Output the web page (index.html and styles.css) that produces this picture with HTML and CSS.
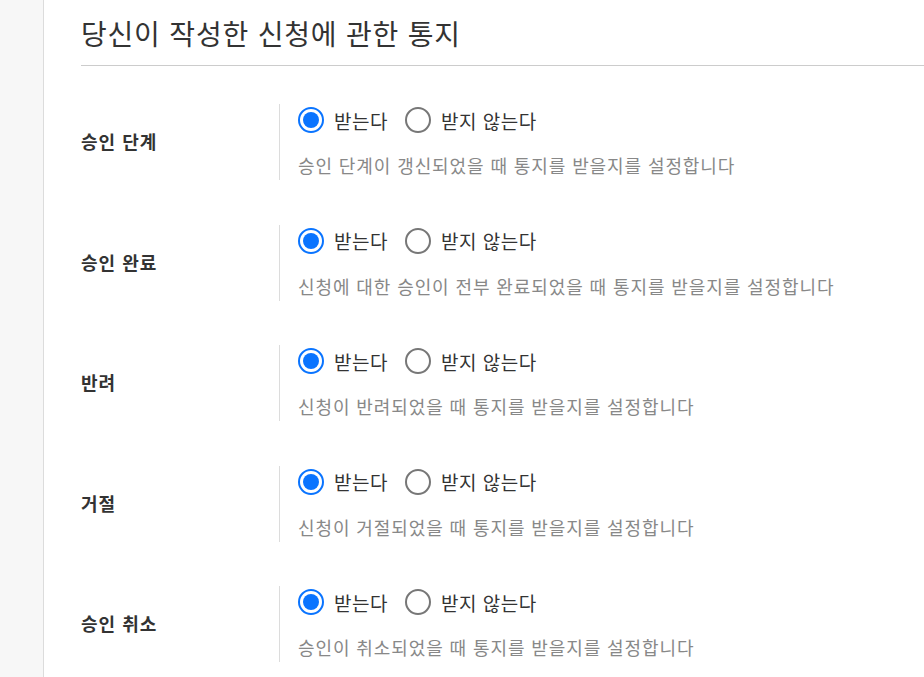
FILE: index.html
```html
<!DOCTYPE html>
<html lang="ko">
<head>
<meta charset="utf-8">
<link rel="stylesheet" href="styles.css">
</head>
<body>
<div class="layout">
  <aside class="side"></aside>
  <main class="main">
    <h1 class="title">당신이 작성한 신청에 관한 통지</h1>
    <div class="rows">
      <div class="row">
        <div class="label">승인 단계</div>
        <div class="field">
          <div class="options">
            <span class="opt"><span class="radio on"></span>받는다</span>
            <span class="opt"><span class="radio"></span>받지 않는다</span>
          </div>
          <div class="desc">승인 단계이 갱신되었을 때 통지를 받을지를 설정합니다</div>
        </div>
      </div>
      <div class="row">
        <div class="label">승인 완료</div>
        <div class="field">
          <div class="options">
            <span class="opt"><span class="radio on"></span>받는다</span>
            <span class="opt"><span class="radio"></span>받지 않는다</span>
          </div>
          <div class="desc">신청에 대한 승인이 전부 완료되었을 때 통지를 받을지를 설정합니다</div>
        </div>
      </div>
      <div class="row">
        <div class="label">반려</div>
        <div class="field">
          <div class="options">
            <span class="opt"><span class="radio on"></span>받는다</span>
            <span class="opt"><span class="radio"></span>받지 않는다</span>
          </div>
          <div class="desc">신청이 반려되었을 때 통지를 받을지를 설정합니다</div>
        </div>
      </div>
      <div class="row">
        <div class="label">거절</div>
        <div class="field">
          <div class="options">
            <span class="opt"><span class="radio on"></span>받는다</span>
            <span class="opt"><span class="radio"></span>받지 않는다</span>
          </div>
          <div class="desc">신청이 거절되었을 때 통지를 받을지를 설정합니다</div>
        </div>
      </div>
      <div class="row">
        <div class="label">승인 취소</div>
        <div class="field">
          <div class="options">
            <span class="opt"><span class="radio on"></span>받는다</span>
            <span class="opt"><span class="radio"></span>받지 않는다</span>
          </div>
          <div class="desc">승인이 취소되었을 때 통지를 받을지를 설정합니다</div>
        </div>
      </div>
    </div>
  </main>
</div>
</body>
</html>
```

FILE: styles.css
```css
html, body {
  margin: 0;
  padding: 0;
  background: #fff;
  font-family: "Noto Sans CJK KR", "Noto Sans", sans-serif;
  color: #333;
}
.layout {
  display: flex;
  min-height: 677px;
}
.side {
  width: 43px;
  flex: none;
  background: #f7f7f7;
  border-right: 1px solid #dcdcdc;
}
.main {
  flex: 1;
  padding-left: 37px;
  overflow: hidden;
}
.title {
  margin: 0;
  padding-top: 13px;
  height: 52px;
  font-size: 28px;
  line-height: 40px;
  letter-spacing: 0.8px;
  font-weight: 400;
  color: #333;
  border-bottom: 1px solid #ccc;
  white-space: nowrap;
}
.rows {
  display: flex;
  flex-direction: column;
  gap: 44.5px;
  padding-top: 38px;
}
.row {
  display: flex;
  align-items: center;
}
.label {
  width: 198px;
  flex: none;
  font-size: 18px;
  letter-spacing: 1px;
  line-height: 24px;
  margin-top: -2px;
  font-weight: 700;
  color: #333;
}
.field {
  border-left: 1px solid #dcdcdc;
  padding-left: 18px;
  padding-bottom: 3px;
}
.options {
  display: flex;
  gap: 17px;
  height: 32px;
  align-items: center;
}
.opt {
  display: flex;
  align-items: center;
  gap: 10px;
  font-size: 19px;
  letter-spacing: 0.5px;
  color: #333;
  white-space: nowrap;
}
.radio {
  width: 22px;
  height: 22px;
  border: 2px solid #777;
  border-radius: 50%;
  box-sizing: content-box;
  display: flex;
  align-items: center;
  justify-content: center;
  background: #fff;
}
.radio.on {
  border-color: #0a74ff;
}
.radio.on::after {
  content: "";
  width: 16px;
  height: 16px;
  border-radius: 50%;
  background: #0a74ff;
}
.desc {
  margin-top: 17px;
  font-size: 18px;
  letter-spacing: 0.9px;
  line-height: 24px;
  color: #888;
  white-space: nowrap;
}
```
